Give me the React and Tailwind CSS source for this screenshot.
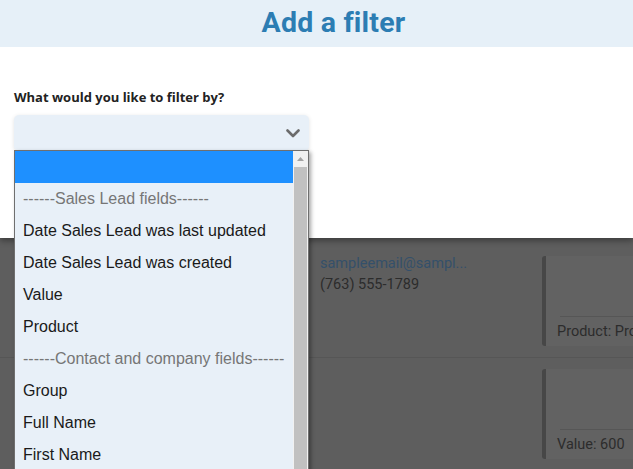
import React from 'react';

const options = [
  { label: '', selected: true },
  { label: '------Sales Lead fields------', group: true },
  { label: 'Date Sales Lead was last updated' },
  { label: 'Date Sales Lead was created' },
  { label: 'Value' },
  { label: 'Product' },
  { label: '------Contact and company fields------', group: true },
  { label: 'Group' },
  { label: 'Full Name' },
  { label: 'First Name' },
];

const ChevronDown = () => (
  <svg width="14" height="9" viewBox="0 0 14 9" fill="none">
    <path d="M1.5 1.5 L7 7 L12.5 1.5" stroke="#6b6b6b" strokeWidth="2.6" strokeLinecap="round" strokeLinejoin="round" />
  </svg>
);

const LeadCard = ({ text }) => (
  <div className="ml-[222px] h-[90px] w-[120px] rounded-[3px] border-l-4 border-[#474747] bg-[#626262] flex flex-col justify-end">
    <div className="ml-[14px] border-t border-[#565656] h-[30px] flex items-center">
      <span className="-ml-[3px] text-[14.5px] text-[#2c2c2c] whitespace-nowrap">{text}</span>
    </div>
  </div>
);

export default function App() {
  return (
    <div className="relative w-[633px] h-[469px] overflow-hidden bg-[#5e5e5e]" style={{ fontFamily: 'Roboto, "Noto Sans", sans-serif' }}>
      {/* modal */}
      <div className="bg-white shadow-[0_3px_6px_rgba(0,0,0,0.35)] relative z-10">
        <div className="h-[47px] bg-[#e6f0f8] flex items-center justify-center pl-[34px]">
          <h1 className="text-[28.5px] font-bold text-[#2c7db3] tracking-[0.2px]">Add a filter</h1>
        </div>
        <div className="h-[191px] px-[14px] pt-[42px]">
          <label className="block text-[13px] font-bold text-[#222] leading-[16px]" style={{ fontFamily: '"Open Sans", sans-serif' }}>
            What would you like to filter by?
          </label>
          <div className="mt-[10px] w-[295px] h-[36px] rounded-[5px] bg-[#e8f0f8] shadow-[0_1px_4px_rgba(0,0,0,0.12)] flex items-center justify-end pr-[9px]">
            <ChevronDown />
          </div>
        </div>
      </div>

      {/* page behind the overlay */}
      <div className="pl-[320px] pt-[15px]">
        <div className="text-[14.5px] text-[#34506a] leading-[21px]">sampleemail@sampl...</div>
        <div className="text-[14.5px] text-[#2c2c2c] leading-[21px]">(763) 555-1789</div>
      </div>
      <div className="absolute left-0 right-0 top-[256px]">
        <div className="pl-[320px]">
          <LeadCard text="Product: Product" />
        </div>
        <div className="mt-[11px] border-t border-[#565656]" />
        <div className="pl-[320px] mt-[11px]">
          <LeadCard text="Value: 600" />
        </div>
      </div>

      {/* open dropdown list */}
      <div className="absolute z-20 left-[14px] top-[150px] w-[295px] h-[330px] border border-[#6f6f6f] bg-[#e8f0f8] flex shadow-[2px_2px_4px_rgba(0,0,0,0.35)]" style={{ fontFamily: '"Liberation Sans", Arial, sans-serif' }}>
        <div className="flex-1">
          {options.map((o, i) => (
            <div
              key={i}
              className={
                'h-[32px] pl-[8px] flex items-center text-[16px] whitespace-nowrap ' +
                (o.selected ? 'bg-[#1e90ff] text-white' : o.group ? 'text-[#767676]' : 'text-[#1a1a1a]')
              }
            >
              {o.label}
            </div>
          ))}
        </div>
        <div className="w-[15px] bg-[#f1f1f1] flex flex-col items-center">
          <div className="h-[16px] flex items-center justify-center">
            <svg width="7" height="4" viewBox="0 0 7 4"><path d="M0 4 L3.5 0 L7 4 Z" fill="#a3a3a3" /></svg>
          </div>
          <div className="w-[13px] flex-1 bg-[#c1c1c1]" />
        </div>
      </div>
    </div>
  );
}
